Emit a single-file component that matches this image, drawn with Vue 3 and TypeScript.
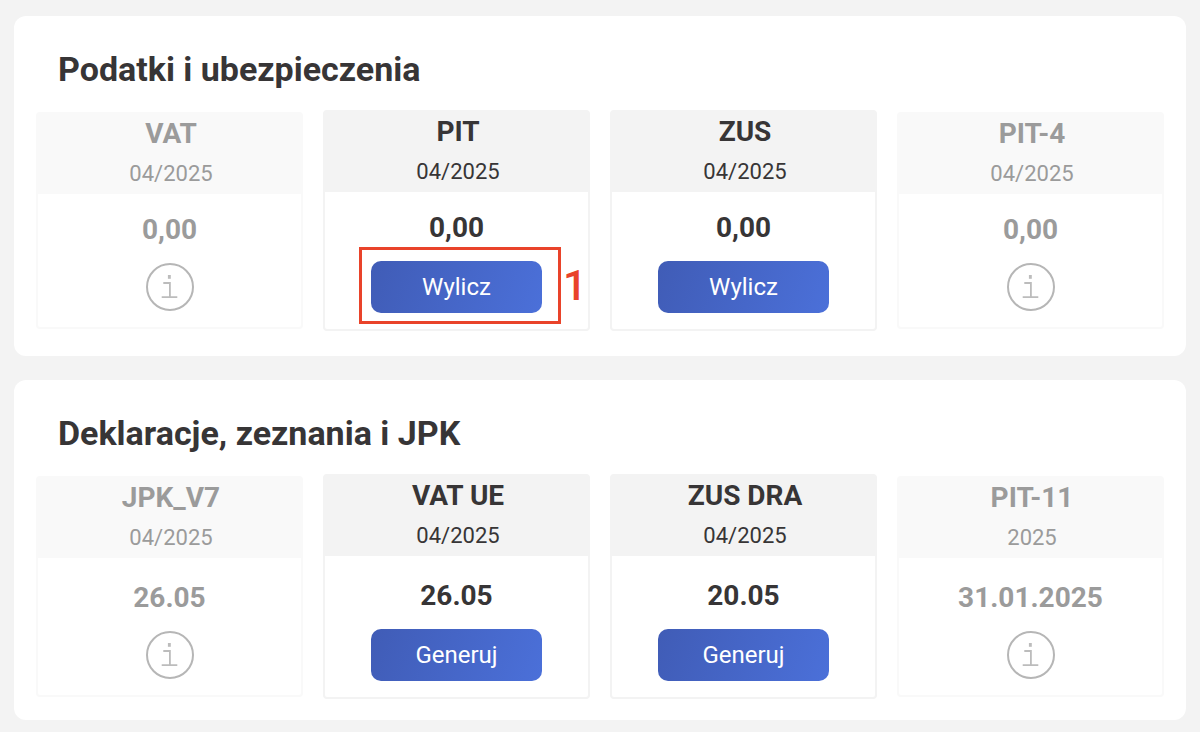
<script setup lang="ts">
interface Tile {
  name: string
  period: string
  value: string
  action?: string
  step?: number
}

interface Panel {
  id: string
  title: string
  roomy: boolean
  tiles: Tile[]
}

const panels: Panel[] = [
  {
    id: 'taxes',
    title: 'Podatki i ubezpieczenia',
    roomy: false,
    tiles: [
      { name: 'VAT', period: '04/2025', value: '0,00' },
      { name: 'PIT', period: '04/2025', value: '0,00', action: 'Wylicz', step: 1 },
      { name: 'ZUS', period: '04/2025', value: '0,00', action: 'Wylicz' },
      { name: 'PIT-4', period: '04/2025', value: '0,00' },
    ],
  },
  {
    id: 'declarations',
    title: 'Deklaracje, zeznania i JPK',
    roomy: true,
    tiles: [
      { name: 'JPK_V7', period: '04/2025', value: '26.05' },
      { name: 'VAT UE', period: '04/2025', value: '26.05', action: 'Generuj' },
      { name: 'ZUS DRA', period: '04/2025', value: '20.05', action: 'Generuj' },
      { name: 'PIT-11', period: '2025', value: '31.01.2025' },
    ],
  },
]
</script>

<template>
  <main class="page">
    <section
      v-for="panel in panels"
      :key="panel.id"
      class="panel"
      :class="{ roomy: panel.roomy }"
      :aria-labelledby="panel.id"
    >
      <h2 :id="panel.id" class="panel-title">{{ panel.title }}</h2>
      <div class="tiles">
        <article
          v-for="tile in panel.tiles"
          :key="tile.name"
          class="tile"
          :class="{ muted: !tile.action }"
        >
          <header class="tile-head">
            <h3 class="tile-name">{{ tile.name }}</h3>
            <p class="tile-period">{{ tile.period }}</p>
          </header>
          <div class="tile-body">
            <p class="tile-value">{{ tile.value }}</p>
            <div v-if="tile.action" class="action">
              <button type="button" class="action-button">{{ tile.action }}</button>
              <span v-if="tile.step" class="marker">
                <span class="marker-number">{{ tile.step }}</span>
              </span>
            </div>
            <button v-else type="button" class="info-button" aria-label="Informacje">
              <svg viewBox="0 0 48 48" width="48" height="48" aria-hidden="true">
                <circle cx="24" cy="24" r="23" fill="none" stroke="#b6b6b6" stroke-width="2" />
                <path
                  d="M17.3 20H23.9V34M15.7 34.2H31.3"
                  fill="none"
                  stroke="#bcbcbc"
                  stroke-width="1.8"
                />
                <path d="M21.9 12H24.8V15.8H21.9Z" fill="#bcbcbc" />
              </svg>
            </button>
          </div>
        </article>
      </div>
    </section>
  </main>
</template>

<style>
body {
  margin: 0;
  background: #f3f3f3;
}
</style>

<style scoped>
.page {
  box-sizing: border-box;
  display: grid;
  grid-auto-rows: 1fr;
  gap: 24px;
  min-height: 100vh;
  padding: 16px 14px 12px;
  font-family: Roboto, "Liberation Sans", sans-serif;
  color: #373536;
}

.panel {
  padding: 33px 22px 20px;
  border-radius: 12px;
  background: #fff;
}

.panel-title {
  margin: 0 22px 21px;
  font-size: 34px;
  line-height: 40px;
  font-weight: 700;
}

.tiles {
  display: grid;
  grid-template-columns: repeat(4, minmax(0, 1fr));
  gap: 20px;
  align-items: center;
}

.tile {
  box-sizing: border-box;
  border: 2px solid #f3f3f3;
  border-radius: 4px;
  text-align: center;
}

.tile-head {
  padding-left: 3px;
  background: #f3f3f3;
}

.tile-name,
.tile-period,
.tile-value {
  margin: 0;
}

.tile-name {
  font-size: 28px;
  line-height: 40px;
  font-weight: 700;
}

.tile-period {
  font-size: 22px;
  line-height: 40px;
}

.tile-body {
  display: flex;
  flex-direction: column;
  align-items: center;
  padding: 16px 0;
}

.roomy .tile-body {
  padding-top: 20px;
}

.tile-value {
  margin-bottom: 13px;
  font-size: 28px;
  line-height: 40px;
  font-weight: 700;
}

.action {
  position: relative;
  width: 65%;
}

.action-button {
  display: block;
  width: 100%;
  height: 52px;
  padding: 0;
  border: 0;
  border-radius: 10px;
  background: linear-gradient(110deg, #405cb6, #4b70d9);
  color: #fff;
  font-family: inherit;
  font-size: 24px;
  line-height: 52px;
  cursor: pointer;
}

.marker {
  position: absolute;
  inset: -14px -19px -11px -12px;
  border: 3px solid #e9432a;
  pointer-events: none;
}

.marker-number {
  position: absolute;
  top: 11px;
  left: 100%;
  margin-left: 5px;
  color: #e9432a;
  font-size: 42px;
  line-height: 50px;
  font-weight: 500;
}

.info-button {
  display: block;
  width: 48px;
  height: 48px;
  padding: 0;
  border: 0;
  border-radius: 50%;
  background: none;
  cursor: pointer;
}

.info-button svg {
  display: block;
}

.muted {
  border-color: #f9f9f9;
  color: #9b9b9b;
}

.muted .tile-head {
  background: #f9f9f9;
}
</style>
